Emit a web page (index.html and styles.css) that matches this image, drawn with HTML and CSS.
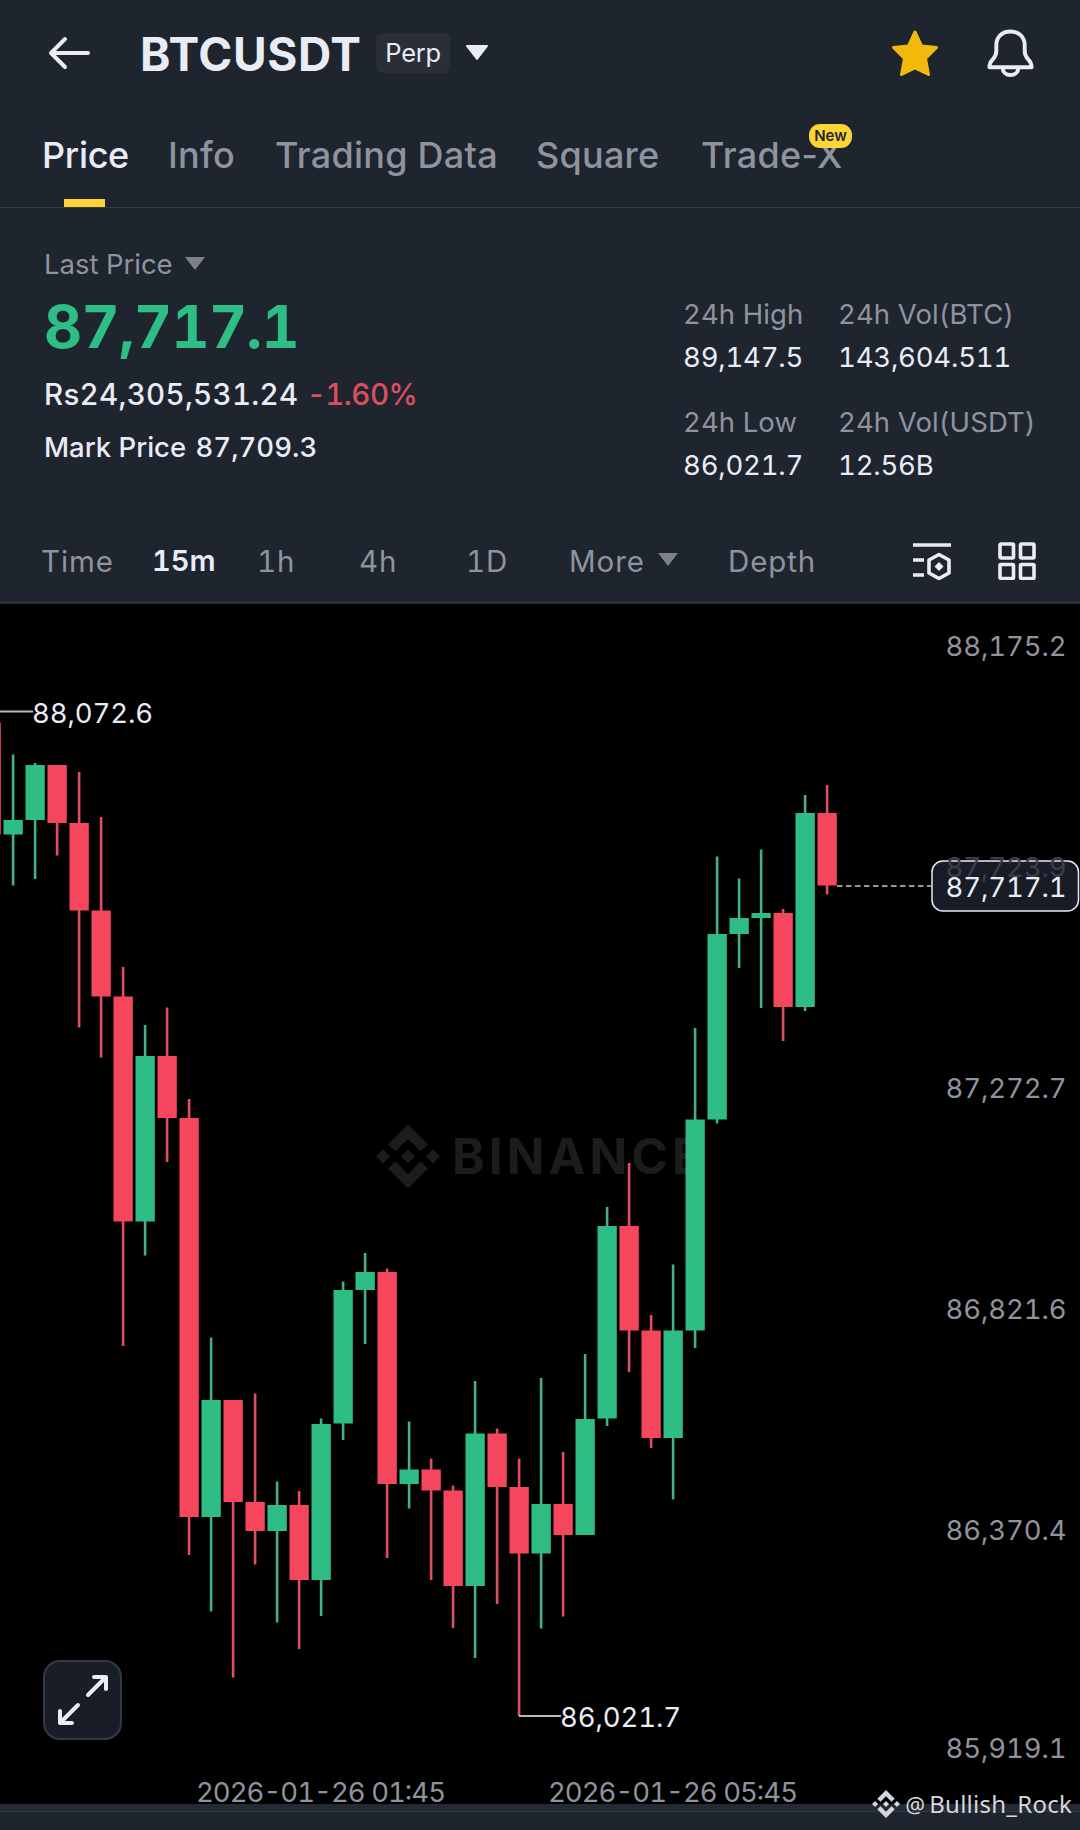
FILE: index.html
```html
<!DOCTYPE html>
<html lang="en">
<head>
  <meta charset="UTF-8">
  <title>BTCUSDT Perp</title>
  <link rel="stylesheet" href="styles.css">
</head>
<body>

  <header class="topbar">
    <svg class="back" width="44" height="36" viewBox="0 0 44 36">
      <path d="M40 18H3M17 4L3 18L17 32" />
    </svg>
    <h1 class="symbol">BTCUSDT</h1>
    <span class="perp">Perp</span>
    <svg class="caret" width="24" height="16" viewBox="0 0 24 16">
      <path d="M2 1H22L12 14Z" />
    </svg>
    <svg class="star" width="48" height="48" viewBox="0 0 48 48">
      <path d="M24 3L30.500 17L45.500 18.500L34.500 29.500L37.500 45.500L24 39L10.500 45.500L13.500 29.500L2.500 18.500L17.500 17Z" />
    </svg>
    <svg class="bell" width="48" height="50" viewBox="0 0 48 50">
      <path d="M24 3C15 3 9.500 9 9.500 17V23C9.500 27 8 29.500 5.500 32C3 34.500 2.500 36 2.500 39.500H45.500C45.500 36 45 34.500 42.500 32C40 29.500 38.500 27 38.500 23V17C38.500 9 33 3 24 3Z" />
      <path d="M16 40C16 44.500 19.500 47.500 24 47.500S32 44.500 32 40" />
    </svg>
  </header>

  <nav class="tabs">
    <a class="tab active">Price</a>
    <a class="tab">Info</a>
    <a class="tab">Trading Data</a>
    <a class="tab">Square</a>
    <a class="tab">Trade-X<span class="new">New</span></a>
  </nav>

  <section class="summary">
    <div class="last">
      <div class="label">Last Price
        <svg width="20" height="13" viewBox="0 0 20 13"><path d="M0 0H20L10 13Z" /></svg>
      </div>
      <div class="price">87,717.1</div>
      <div class="fiat">Rs24,305,531.24 <span class="change">-1.60%</span></div>
      <div class="mark">Mark Price <span class="mark-value">87,709.3</span></div>
    </div>
    <dl class="stats">
      <div><dt>24h High</dt><dd>89,147.5</dd></div>
      <div><dt>24h Vol(BTC)</dt><dd>143,604.511</dd></div>
      <div><dt>24h Low</dt><dd>86,021.7</dd></div>
      <div><dt>24h Vol(USDT)</dt><dd>12.56B</dd></div>
    </dl>
  </section>

  <nav class="intervals">
    <span>Time</span>
    <span class="selected">15m</span>
    <span>1h</span>
    <span>4h</span>
    <span>1D</span>
    <span class="more">More <svg width="20" height="13" viewBox="0 0 20 13"><path d="M0 0H20L10 13Z" /></svg></span>
    <span>Depth</span>
    <svg class="tool" width="40" height="38" viewBox="0 0 40 38">
      <path d="M1 3H39M1 18H12M1 33H12" />
      <path d="M27 12.500L37 18V31L27 36.500L17 31V18Z" />
      <path class="solid" d="M27 20L31.500 24.500L27 29L22.500 24.500Z" />
    </svg>
    <svg class="tool" width="38" height="38" viewBox="0 0 38 38">
      <rect x="2" y="2" width="13.500" height="14" rx="1" />
      <rect x="22.500" y="2" width="13.500" height="14" rx="1" />
      <rect x="2" y="22.500" width="13.500" height="14" rx="1" />
      <rect x="22.500" y="22.500" width="13.500" height="14" rx="1" />
    </svg>
  </nav>

  <main class="chart">
    <svg class="plot" viewBox="0 604 1080 1200">
      <defs>
        <g id="logo">
          <path d="M32 0L52 20L44.500 27L32 14.500L19.500 27L12 20Z" />
          <path d="M32 64L52 44L44.500 37L32 49.500L19.500 37L12 44Z" />
          <path d="M32 25L39 32L32 39L25 32Z" />
          <path d="M7 25L14 32L7 39L0 32Z" />
          <path d="M57 25L64 32L57 39L50 32Z" />
        </g>
      </defs>

      <!-- watermark behind the candles -->
      <g class="brand">
        <use href="#logo" x="376" y="1124.500" />
        <text x="452" y="1174" textLength="250">BINANCE</text>
      </g>

      <g id="candles"></g>

      <g class="axis">
        <text x="945.500" y="656" textLength="121">88,175.2</text>
        <text x="945.500" y="877" textLength="121" class="covered">87,723.9</text>
        <text x="945.500" y="1097.500" textLength="121">87,272.7</text>
        <text x="945.500" y="1318.500" textLength="121">86,821.6</text>
        <text x="945.500" y="1539.500" textLength="121">86,370.4</text>
        <text x="945.500" y="1758" textLength="121">85,919.1</text>
        <text x="196" y="1801.500" textLength="250">2026-01-26 01:45</text>
        <text x="548" y="1801.500" textLength="250">2026-01-26 05:45</text>
      </g>

      <g class="extremes">
        <path d="M0 711.500H33M519 1716H561" />
        <text x="32" y="723" textLength="121">88,072.6</text>
        <text x="560" y="1727" textLength="121">86,021.7</text>
      </g>

      <!-- current price -->
      <g class="current">
        <path d="M837 886H931" />
        <rect x="932" y="861" width="146.500" height="50" rx="11" />
        <text x="945.500" y="877" textLength="121" class="ghost">87,723.9</text>
        <text x="945.500" y="897" textLength="121">87,717.1</text>
      </g>
    </svg>

    <button class="expand">
      <svg width="56" height="56" viewBox="0 0 56 56">
        <path d="M33 23L51 5M39 5H51V17" />
        <path d="M23 33L5 51M5 39V51H17" />
      </svg>
    </button>
  </main>

  <footer class="bottom"></footer>

  <div class="author">
    <svg width="28" height="28" viewBox="0 0 64 64"><use href="#logo" /></svg>
    <span class="at">@</span><span>Bullish_Rock</span>
  </div>

  <script src="chart.js"></script>
</body>
</html>
```
FILE: styles.css
```css
* {
  box-sizing: border-box;
}

body {
  margin: 0;
  width: 1080px;
  height: 1830px;
  position: relative;
  overflow: hidden;
  background: #1f252f;
  color: #eaecf5;
  font-family: Inter, Roboto, sans-serif;
  font-size: 27.5px;
  line-height: 40px;
  font-variant-numeric: tabular-nums;
  white-space: nowrap;
}

svg {
  display: block;
  flex: none;
}

/* top bar */
.topbar {
  display: flex;
  align-items: center;
  height: 106px;
  padding: 0 46px 0 48px;
}

.back, .bell {
  fill: none;
  stroke: #eaecf5;
  stroke-width: 4;
  stroke-linecap: round;
  stroke-linejoin: round;
}

.symbol {
  margin: 1px 0 0 48px;
  width: 236px;
  font-size: 46px;
  font-weight: 700;
  letter-spacing: 0.6px;
}

.perp {
  width: 74px;
  height: 40px;
  border-radius: 6px;
  background: #2a2e38;
  font-size: 25.5px;
  letter-spacing: -0.3px;
  text-align: center;
}

.caret {
  margin-left: 15px;
  fill: #eaecf5;
  stroke: #eaecf5;
  stroke-width: 2;
  stroke-linejoin: round;
}

.star {
  margin-left: auto;
  fill: #f0b90b;
  stroke: #f0b90b;
  stroke-width: 3;
  stroke-linejoin: round;
}

.bell {
  width: 47px;
  margin-left: 48px;
}

/* tabs */
.tabs {
  display: grid;
  grid-template-columns: 126px 107px 261px 165px 150px;
  height: 102px;
  padding: 29px 0 0 42px;
  border-bottom: 1px solid #343b46;
  color: #8f939e;
  font-size: 36px;
  font-weight: 500;
  font-variant-numeric: normal;
}

.tab {
  position: relative;
  justify-self: start;
  letter-spacing: 0.25px;
}

.tab.active {
  color: #eaecf5;
  letter-spacing: -0.3px;
}

.tab.active::after {
  content: "";
  position: absolute;
  left: 22px;
  top: 64px;
  width: 41px;
  height: 8px;
  background: #fcd535;
}

.new {
  position: absolute;
  left: 108px;
  top: -11px;
  width: 43px;
  height: 24px;
  border-radius: 11px;
  background: #fcd535;
  color: #202630;
  font-size: 15px;
  font-weight: 600;
  line-height: 24px;
  letter-spacing: 0;
  text-align: center;
}

/* price summary */
.summary {
  display: flex;
  justify-content: space-between;
  height: 312px;
  padding: 36px 47px 0 44px;
}

.label {
  display: flex;
  align-items: center;
  gap: 12px;
  color: #8f939e;
}

.label svg, .more svg {
  margin-top: -2px;
  fill: #7d818b;
}

.price {
  margin: 8px 0 12px;
  font-size: 59px;
  font-weight: 700;
  line-height: 70px;
  letter-spacing: -0.7px;
  color: #2ebd85;
}

.fiat {
  font-size: 29.5px;
  font-weight: 500;
  letter-spacing: 0.3px;
}

.change {
  letter-spacing: -0.5px;
  color: #dc4f60;
}

.mark {
  margin-top: 13px;
  font-weight: 500;
}

.mark-value {
  margin-left: 2px;
}

.stats {
  display: grid;
  grid-template-columns: 155px 195px;
  grid-auto-rows: 86px;
  row-gap: 22px;
  margin: 50px 0 0;
}

.stats dt {
  height: 43px;
  color: #8f939e;
  letter-spacing: 0.1px;
}

.stats dd {
  margin: 0;
  letter-spacing: -0.2px;
}

/* interval picker */
.intervals {
  display: grid;
  grid-template-columns: 111px 105px 102px 107px 103px 159px 184px 86px 40px;
  align-items: center;
  height: 84px;
  padding: 0 0 0 41px;
  border-bottom: 3px solid #2b313b;
  color: #8f939e;
  font-size: 29.5px;
  letter-spacing: 0.9px;
}

.selected {
  color: #eaecf5;
  font-weight: 600;
  font-size: 29px;
  letter-spacing: 0;
}

.more {
  display: flex;
  align-items: center;
  gap: 13px;
}

.tool {
  fill: none;
  stroke: #eaecf5;
  stroke-width: 3.6;
  stroke-linejoin: round;
}

.tool .solid {
  fill: #eaecf5;
  stroke: none;
}

/* chart */
.chart {
  position: relative;
  height: 1200px;
  background: #000;
}

.plot {
  width: 1080px;
  height: 1200px;
}

.brand {
  fill: #1c1c1d;
  font-size: 49.5px;
  font-weight: 700;
}

.axis {
  fill: #8f939e;
}

.up { fill: #2ebd85; }
.down { fill: #f6465d; }

.wick.up { fill: #43b186; }
.wick.down { fill: #dd5064; }

.extremes {
  fill: #eaecf5;
}

.extremes path {
  stroke: #b4b9c2;
  stroke-width: 2;
}

.current text {
  fill: #eaecf5;
}

.current path {
  stroke: #c5c8d0;
  stroke-width: 1.5;
  stroke-dasharray: 5.5 3.5;
}

.current rect {
  fill: #171c27;
  stroke: #eaecf5;
  stroke-width: 1.5;
}

.axis .covered {
  fill: #4a4d54;
}

.current .ghost {
  fill: #3a3e48;
}

.expand {
  position: absolute;
  left: 43px;
  bottom: 64px;
  display: flex;
  align-items: center;
  justify-content: center;
  width: 79px;
  height: 80px;
  padding: 0;
  border: 2px solid #333a45;
  border-radius: 17px;
  background: #181d27;
}

.expand path {
  fill: none;
  stroke: #eaecf5;
  stroke-width: 4;
  stroke-linecap: round;
  stroke-linejoin: round;
}

.bottom {
  height: 26px;
  background: linear-gradient(#232a34 7px, #303740 7px, #303740 8px, #1f252f 8px);
}

.author {
  position: absolute;
  right: 8px;
  bottom: 6px;
  display: flex;
  align-items: center;
  color: #d5d7db;
  fill: #d5d7db;
  font-family: "Noto Sans", sans-serif;
  font-size: 24px;
  letter-spacing: 0.25px;
}

.at {
  margin: 0 4px 0 5px;
  font-size: 22px;
}
```
FILE: chart.js
```js
// [high, body top, body bottom, low, up?] in plot coordinates, one every 22px
const candles = [
  [723, 723, 834.5, 834.5, 0],
  [754.5, 820, 834.5, 885.5, 1],
  [763, 765, 820, 879, 1],
  [765, 765, 823, 855.5, 0],
  [772, 823, 910.5, 1027.5, 0],
  [817, 910.5, 996.5, 1057.5, 0],
  [967, 996.5, 1221.5, 1346, 0],
  [1025, 1056, 1221.5, 1255.5, 1],
  [1007.5, 1056, 1118, 1162, 0],
  [1099, 1118, 1517, 1555, 0],
  [1337.5, 1400, 1517, 1611.5, 1],
  [1400, 1400, 1502, 1677.5, 0],
  [1393.5, 1502, 1531, 1564.5, 0],
  [1481.5, 1505, 1531, 1622.5, 1],
  [1491, 1505, 1580, 1649, 0],
  [1418.5, 1424, 1580, 1616, 1],
  [1281.5, 1290, 1423.5, 1440, 1],
  [1253, 1272, 1290, 1344, 1],
  [1268.5, 1272, 1484, 1558, 0],
  [1421.5, 1469.5, 1484, 1508.5, 1],
  [1458.5, 1469.5, 1490.5, 1580, 0],
  [1485.5, 1490.5, 1586, 1628, 0],
  [1381, 1433.5, 1586, 1658, 1],
  [1428.5, 1433.5, 1487, 1604, 0],
  [1458.5, 1487, 1553.5, 1716, 0],
  [1378, 1504, 1553.5, 1628.5, 1],
  [1452, 1504, 1535, 1616.5, 0],
  [1354, 1419, 1535, 1535, 1],
  [1207, 1226, 1418.5, 1426, 1],
  [1163, 1226, 1330.5, 1372, 0],
  [1315, 1330.5, 1438, 1448, 0],
  [1264.5, 1330.5, 1438, 1499.5, 1],
  [1028, 1119.5, 1330.5, 1348, 1],
  [856.5, 934, 1119.5, 1123.5, 1],
  [878.5, 918, 934, 968, 1],
  [849.5, 913, 918, 1008, 1],
  [909, 913, 1007, 1041, 0],
  [795, 813, 1007, 1011, 1],
  [785, 813, 885.5, 894.5, 0]
];

const group = document.getElementById('candles');

function bar(cls, x, top, width, bottom) {
  const r = document.createElementNS('http://www.w3.org/2000/svg', 'rect');
  r.setAttribute('class', cls);
  r.setAttribute('x', x);
  r.setAttribute('y', top);
  r.setAttribute('width', width);
  r.setAttribute('height', bottom - top);
  group.appendChild(r);
}

candles.forEach(([high, top, bottom, low, up], i) => {
  const x = -9 + i * 22;
  const cls = up ? 'up' : 'down';
  bar('wick ' + cls, x - 1.2, high, 2.6, low);
  bar(cls, x - 9.5, top, 19.3, bottom);
});
```
